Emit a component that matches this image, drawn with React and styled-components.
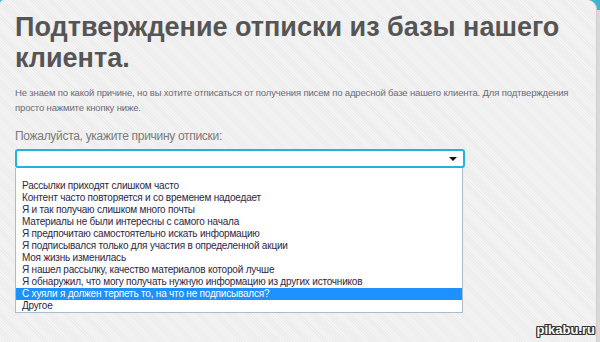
import styled, { createGlobalStyle } from 'styled-components';

const GlobalStyle = createGlobalStyle`
  body {
    margin: 0;
    font-family: "Liberation Sans", Arial, sans-serif;
  }
`;

const REASONS = [
  '',
  'Рассылки приходят слишком часто',
  'Контент часто повторяется и со временем надоедает',
  'Я и так получаю слишком много почты',
  'Материалы не были интересны с самого начала',
  'Я предпочитаю самостоятельно искать информацию',
  'Я подписывался только для участия в определенной акции',
  'Моя жизнь изменилась',
  'Я нашел рассылку, качество материалов которой лучше',
  'Я обнаружил, что могу получать нужную информацию из других источников',
  'С хуяли я должен терпеть то, на что не подписывался?',
  'Другое',
];

const SELECTED = 10;

const App = () => {
  return (
    <>
      <GlobalStyle />
      <StFrame>
        <StPanel>
          <StTitle>Подтверждение отписки из базы нашего клиента.</StTitle>
          <StText>
            Не знаем по какой причине, но вы хотите отписаться от получения писем по адресной базе нашего клиента. Для подтверждения
            просто нажмите кнопку ниже.
          </StText>
          <StLabel>Пожалуйста, укажите причину отписки:</StLabel>
          <StField>
            <StSelect>
              <StArrow />
            </StSelect>
            <StList>
              {REASONS.map((reason, index) => (
                <StOption key={index} $active={index === SELECTED}>
                  {reason}
                </StOption>
              ))}
            </StList>
          </StField>
        </StPanel>
        <StWatermark>pikabu.ru</StWatermark>
      </StFrame>
    </>
  );
};

export default App;

const StFrame = styled.div`
  position: relative;
  width: 600px;
  height: 342px;
  overflow: hidden;
  background: linear-gradient(to bottom, #3ab4cf 0, #3ab4cf 10px, #d9d9d9 10px);
`;

const StPanel = styled.div`
  box-sizing: border-box;
  width: 597px;
  height: 342px;
  padding: 12px 0 0 15px;
  border-radius: 4px 9px 0 0;
  border-right: 1px solid #cfcfcf;
  background: repeating-linear-gradient(45deg, #f4f4f4 0, #f4f4f4 1px, #ececec 1px, #ececec 2px);
`;

const StTitle = styled.h1`
  margin: 0;
  width: 570px;
  font-size: 27px;
  line-height: 31px;
  font-weight: 700;
  color: #555555;
`;

const StText = styled.p`
  margin: 11px 0 0;
  width: 580px;
  font-size: 9.5px;
  line-height: 15px;
  letter-spacing: -0.15px;
  color: #6b6b78;
`;

const StLabel = styled.div`
  margin-top: 13px;
  font-size: 12px;
  line-height: 16px;
  letter-spacing: -0.3px;
  color: #7a7a7a;
`;

const StField = styled.div`
  margin-top: 5px;
  width: 450px;
`;

const StSelect = styled.div`
  box-sizing: border-box;
  position: relative;
  height: 19px;
  border: 2px solid #22b3d6;
  border-radius: 3px;
  background: #ffffff;
`;

const StArrow = styled.span`
  position: absolute;
  right: 6px;
  top: 6px;
  width: 0;
  height: 0;
  border-left: 4px solid transparent;
  border-right: 4px solid transparent;
  border-top: 4px solid #111111;
`;

const StList = styled.div`
  box-sizing: border-box;
  width: 448px;
  border: 1px solid #a9bccb;
  border-top: none;
  background: #ffffff;
`;

const StOption = styled.div`
  height: 12px;
  padding-left: 6px;
  font-size: 10px;
  line-height: 12px;
  letter-spacing: -0.2px;
  white-space: nowrap;
  color: ${({ $active }) => ($active ? '#ffffff' : '#2b2746')};
  background: ${({ $active }) => ($active ? '#1e90ff' : 'transparent')};
`;

const StWatermark = styled.div`
  position: absolute;
  right: 5px;
  bottom: 5px;
  font-size: 13px;
  font-weight: 700;
  color: #ffffff;
  text-shadow: 1px 0 0 #333, -1px 0 0 #333, 0 1px 0 #333, 0 -1px 0 #333, 1px 1px 0 #333, -1px -1px 0 #333, 1px -1px 0 #333, -1px 1px 0 #333;
`;
